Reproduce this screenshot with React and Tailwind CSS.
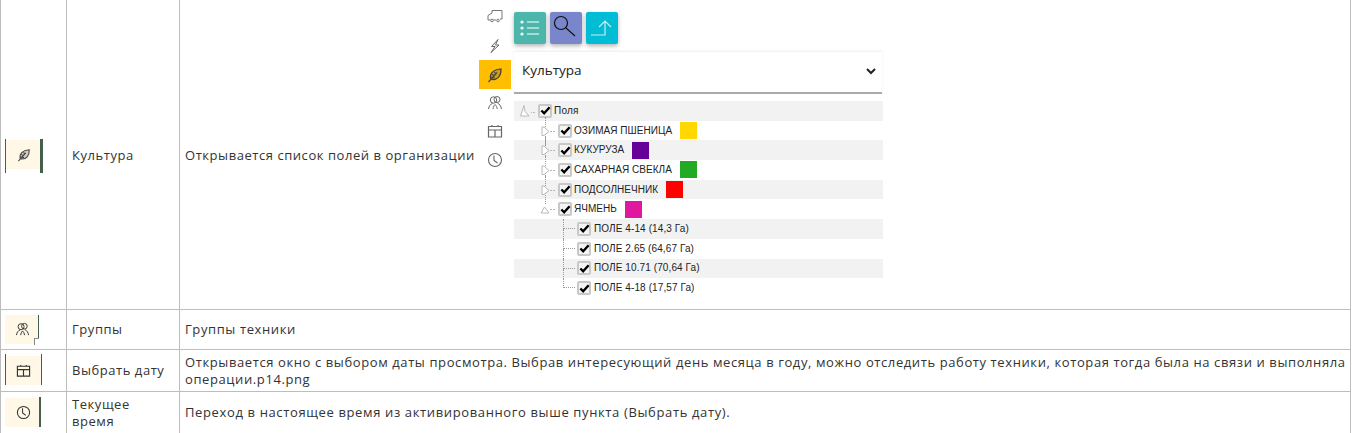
const font = { fontFamily: "'Open Sans', sans-serif" };

const Leaf = ({ className = "" }) => (
  <svg viewBox="0 0 16 16" className={className} fill="currentColor" fillOpacity="0.25" stroke="currentColor" strokeWidth="1.200">
    <path d="M3.500 11.500C2.500 7 6 2.500 14 2c.3 7-3.500 11-9 10.500z" />
    <path d="M1.500 15 10 5.500M5 7.500l3 1.500M7.500 5l1.500 2.500M3.500 10.500l4.500.5" fill="none" />
  </svg>
);

const Truck = ({ className = "" }) => (
  <svg viewBox="0 0 16 16" className={className} fill="none" stroke="currentColor" strokeWidth="0.9">
    <path d="M5 2.500h10v8.500h-2M9 12H6.500M3.500 12H1V7.500l4-2.500V2.500" />
    <circle cx="5" cy="12.500" r="1.300" />
    <circle cx="11" cy="12.500" r="1.300" />
  </svg>
);

const Bolt = ({ className = "" }) => (
  <svg viewBox="0 0 16 16" className={className} fill="none" stroke="currentColor" strokeWidth="1">
    <path d="M11 1.500 4.500 8.500h3.500L4 14.500l8-7.500H8.500z" />
  </svg>
);

const People = ({ className = "" }) => (
  <svg viewBox="0 0 16 16" className={className} fill="none" stroke="currentColor" strokeWidth="1">
    <circle cx="6.500" cy="5" r="3.200" />
    <circle cx="10" cy="4.500" r="3" />
    <path d="M1.500 14c.5-3 2-5 4-5.500M14.500 14c-.5-3-2-5-4-6M6 14c.3-2 1-3.500 2-4.500 1 1 2 2.500 2.300 4.500" />
  </svg>
);

const Calendar = ({ className = "" }) => (
  <svg viewBox="0 0 16 16" className={className} fill="none" stroke="currentColor" strokeWidth="1.200">
    <path d="M1.500 7V14h13V7zM1.500 7V3.500h13V7M8 7v7M5 3.500V2M11 3.500V2" />
  </svg>
);

const Clock = ({ className = "" }) => (
  <svg viewBox="0 0 16 16" className={className} fill="none" stroke="currentColor" strokeWidth="1.100">
    <circle cx="8" cy="8" r="6.500" />
    <path d="M7 3.500v5l3.500 2.500" />
  </svg>
);

const Box = () => (
  <span className="flex w-[14px] h-[14px] shrink-0 items-center justify-center rounded-[2px] bg-[#f4f4f4] border-2 border-[#c8c8c8]">
    <svg viewBox="0 0 12 12" className="w-[11px] h-[11px] shrink-0" fill="none" stroke="#000" strokeWidth="2.600">
      <path d="M1.500 6 4.500 9 10.500 2.500" />
    </svg>
  </span>
);

const Expander = ({ open, root, line }) => (
  <span className="relative flex w-[20px] h-[20px] shrink-0 items-center">
    {line && <span className="absolute left-[7px] -top-[4px] bottom-[-4px] border-l border-dotted border-[#999]" />}
    <svg viewBox="0 0 20 20" className="relative w-[20px] h-[20px]" fill="#fff" stroke="#b8b8b8" strokeWidth="1">
      {root && <path d="M2.500 15 6 4.500 7 10.500 11 15z" />}
      {open && !root && <path d="M3 14 6.500 8 11 14z" />}
      {!open && !root && <path d="M4 6h2l5 4.500-5 4H4z" />}
      <path d={root ? "M13 11.500h1M15 11.500h2" : "M12 10.500h2M15 10.500h2"} fill="none" />
    </svg>
  </span>
);

const crops = [
  { name: "ОЗИМАЯ ПШЕНИЦА", color: "#ffd800", gray: false, line: true },
  { name: "КУКУРУЗА", color: "#660099", gray: true, line: true },
  { name: "САХАРНАЯ СВЕКЛА", color: "#22aa22", gray: false, line: true },
  { name: "ПОДСОЛНЕЧНИК", color: "#ff0000", gray: true, line: true },
  { name: "ЯЧМЕНЬ", color: "#e0189f", gray: false, open: true },
];

const fields = ["ПОЛЕ 4-14 (14,3 Га)", "ПОЛЕ 2.65 (64,67 Га)", "ПОЛЕ 10.71 (70,64 Га)", "ПОЛЕ 4-18 (17,57 Га)"];

const Panel = () => (
  <div className="flex w-[410px] shrink-0 self-start" style={font}>
    <div className="flex flex-col w-[32px] mr-[3px] text-[#666]">
      <div className="flex h-[32px] items-center justify-center"><Truck className="w-[16px] h-[16px]" /></div>
      <div className="flex h-[27px] items-center justify-center"><Bolt className="w-[16px] h-[16px]" /></div>
      <div className="flex h-[29px] mt-[1px] items-center justify-center bg-[#ffbf00] text-[#444]"><Leaf className="w-[16px] h-[16px]" /></div>
      <div className="flex h-[28px] items-center justify-center"><People className="w-[16px] h-[16px]" /></div>
      <div className="flex h-[28px] items-center justify-center"><Calendar className="w-[16px] h-[16px]" /></div>
      <div className="flex h-[30px] items-center justify-center"><Clock className="w-[16px] h-[16px]" /></div>
    </div>
    <div className="w-[369px]">
      <div className="flex gap-[4px] pt-[12px]">
        <div className="flex w-[32px] h-[32px] items-center justify-center rounded-[2px] bg-[#4db6ac] shadow-[0_2px_4px_rgba(0,0,0,0.3)]">
          <svg viewBox="0 0 32 32" className="w-[32px] h-[32px]" fill="none" stroke="#fff" strokeWidth="1.200">
            <path d="M13 10h12M13 16h12M13 22h12" />
            <circle cx="8" cy="10" r="1" /><circle cx="8" cy="16" r="1" /><circle cx="8" cy="22" r="1" />
          </svg>
        </div>
        <div className="flex w-[32px] h-[32px] items-center justify-center rounded-[2px] bg-[#7986cb] shadow-[0_2px_4px_rgba(0,0,0,0.3)]">
          <svg viewBox="0 0 32 32" className="w-[32px] h-[32px]" fill="none" stroke="#111" strokeWidth="1.200">
            <circle cx="11" cy="11" r="6.500" /><path d="M16 16l9 8" />
          </svg>
        </div>
        <div className="flex w-[32px] h-[32px] items-center justify-center rounded-[2px] bg-[#00bcd4] shadow-[0_2px_4px_rgba(0,0,0,0.3)]">
          <svg viewBox="0 0 32 32" className="w-[32px] h-[32px]" fill="none" stroke="#c8eff5" strokeWidth="1.200">
            <path d="M5 23h14V10M13 15l6-6 6 6" />
          </svg>
        </div>
      </div>
      <div className="mt-[8px] flex h-[42px] w-[368px] items-center justify-between pl-[8px] pr-[5px] pb-[3px] border-b-2 border-[#aaa] shadow-[0_-1px_2px_rgba(0,0,0,0.08)]">
        <span className="text-[13.500px] text-[#222] tracking-normal">Культура</span>
        <svg viewBox="0 0 12 12" className="w-[12px] h-[12px]" fill="none" stroke="#222" strokeWidth="2">
          <path d="M2 4l4 4 4-4" />
        </svg>
      </div>
      <div className="mt-[7px] text-[#222] font-['Liberation_Sans',sans-serif] text-[10px] leading-[12px]">
        <div className="flex h-[19.700px] items-center bg-[#f2f2f2] pl-[4px]">
          <Expander open root />
          <Box />
          <span className="ml-[2px] tracking-[0.2px]">Поля</span>
        </div>
        {crops.map((c) => (
          <div key={c.name} className={`flex h-[19.700px] items-center pl-[24px] ${c.gray ? "bg-[#f2f2f2]" : ""}`}>
            <Expander open={c.open} line={c.line} />
            <Box />
            <span className="ml-[2px] tracking-[0.05px]">{c.name}</span>
            <span className="w-[17px] h-[17px] ml-[8px]" style={{ backgroundColor: c.color }} />
          </div>
        ))}
        {fields.map((f, i) => (
          <div key={f} className={`relative flex h-[19.700px] items-center pl-[63px] ${i % 2 === 0 ? "bg-[#f2f2f2]" : ""}`}>
            <span className="absolute left-[49px] top-0 w-[12px] h-[10px] border-l border-b border-dotted border-[#999]" />
            {i < 3 && <span className="absolute left-[49px] top-[10px] h-[10px] border-l border-dotted border-[#999]" />}
            <Box />
            <span className="ml-[3px] tracking-[0.1px]">{f}</span>
          </div>
        ))}
      </div>
    </div>
  </div>
);

const cell = "border border-[#bdbdbd] px-[5px] align-middle";

export default function App() {
  return (
    <div className="h-[433px] w-[1352px] overflow-hidden bg-white text-[13px] leading-[17px] text-[#333] tracking-[0.55px]" style={font}>
      <table className="border-collapse w-[1351px] table-fixed">
        <colgroup>
          <col className="w-[66px]" />
          <col className="w-[113px]" />
          <col />
        </colgroup>
        <tbody>
          <tr className="h-[309px]">
            <td className={`${cell} border-t-0 pl-[4px]`}>
              <div className="relative flex h-[29px] w-[38px] items-center justify-center bg-[#fff8e7] text-[#444]">
                <span className="absolute left-0 -top-px -bottom-[4px] w-px bg-[#44604c]" />
                <span className="absolute right-0 -top-px -bottom-[4px] w-[3px] bg-[#44604c]" />
                <Leaf className="w-[14px] h-[14px]" />
              </div>
            </td>
            <td className={`${cell} border-t-0 pt-[2px]`}>Культура</td>
            <td className={`${cell} border-t-0`}>
              <div className="flex items-center h-[309px]">
                <span className="w-[294px] shrink-0 mt-[2px]">Открывается список полей в организации</span>
                <Panel />
              </div>
            </td>
          </tr>
          <tr className="h-[40px]">
            <td className={`${cell} pl-[4px]`}>
              <div className="relative flex h-[29px] w-[34px] items-center justify-center bg-[#fff8e7] text-[#333]">
                <span className="absolute right-0 top-0 -bottom-px w-px bg-[#44604c]" />
                <span className="absolute right-0 bottom-[-1px] w-[5px] h-[7px] border-l border-t border-[#888] bg-white" />
                <People className="w-[15px] h-[15px]" />
              </div>
            </td>
            <td className={cell}>Группы</td>
            <td className={`${cell} tracking-[0.6px]`}>Группы техники</td>
          </tr>
          <tr className="h-[42px]">
            <td className={`${cell} pl-[4px]`}>
              <div className="relative flex h-[29px] w-[37px] items-center justify-center bg-[#fff8e7] text-[#333]">
                <span className="absolute left-0 -top-[2px] bottom-0 w-px bg-[#44604c]" />
                <span className="absolute right-0 -top-[2px] bottom-0 w-px bg-[#44604c]" />
                <Calendar className="w-[15px] h-[15px]" />
              </div>
            </td>
            <td className={cell}>Выбрать дату</td>
            <td className={`${cell} pr-0 tracking-[0.6px]`}>
              Открывается окно с выбором даты просмотра. Выбрав интересующий день месяца в году, можно отследить работу техники, которая тогда была на связи и выполняла операции.p14.png
            </td>
          </tr>
          <tr className="h-[42px]">
            <td className={`${cell} pl-[4px]`}>
              <div className="relative flex h-[29px] w-[36px] items-center justify-center bg-[#fff8e7] text-[#333]">
                <span className="absolute right-0 -top-px bottom-0 w-[2px] bg-[#44604c]" />
                <Clock className="w-[15px] h-[15px]" />
              </div>
            </td>
            <td className={cell}><div className="w-[80px]">Текущее время</div></td>
            <td className={`${cell} tracking-[0.63px]`}>Переход в настоящее время из активированного выше пункта (Выбрать дату).</td>
          </tr>
        </tbody>
      </table>
    </div>
  );
}
